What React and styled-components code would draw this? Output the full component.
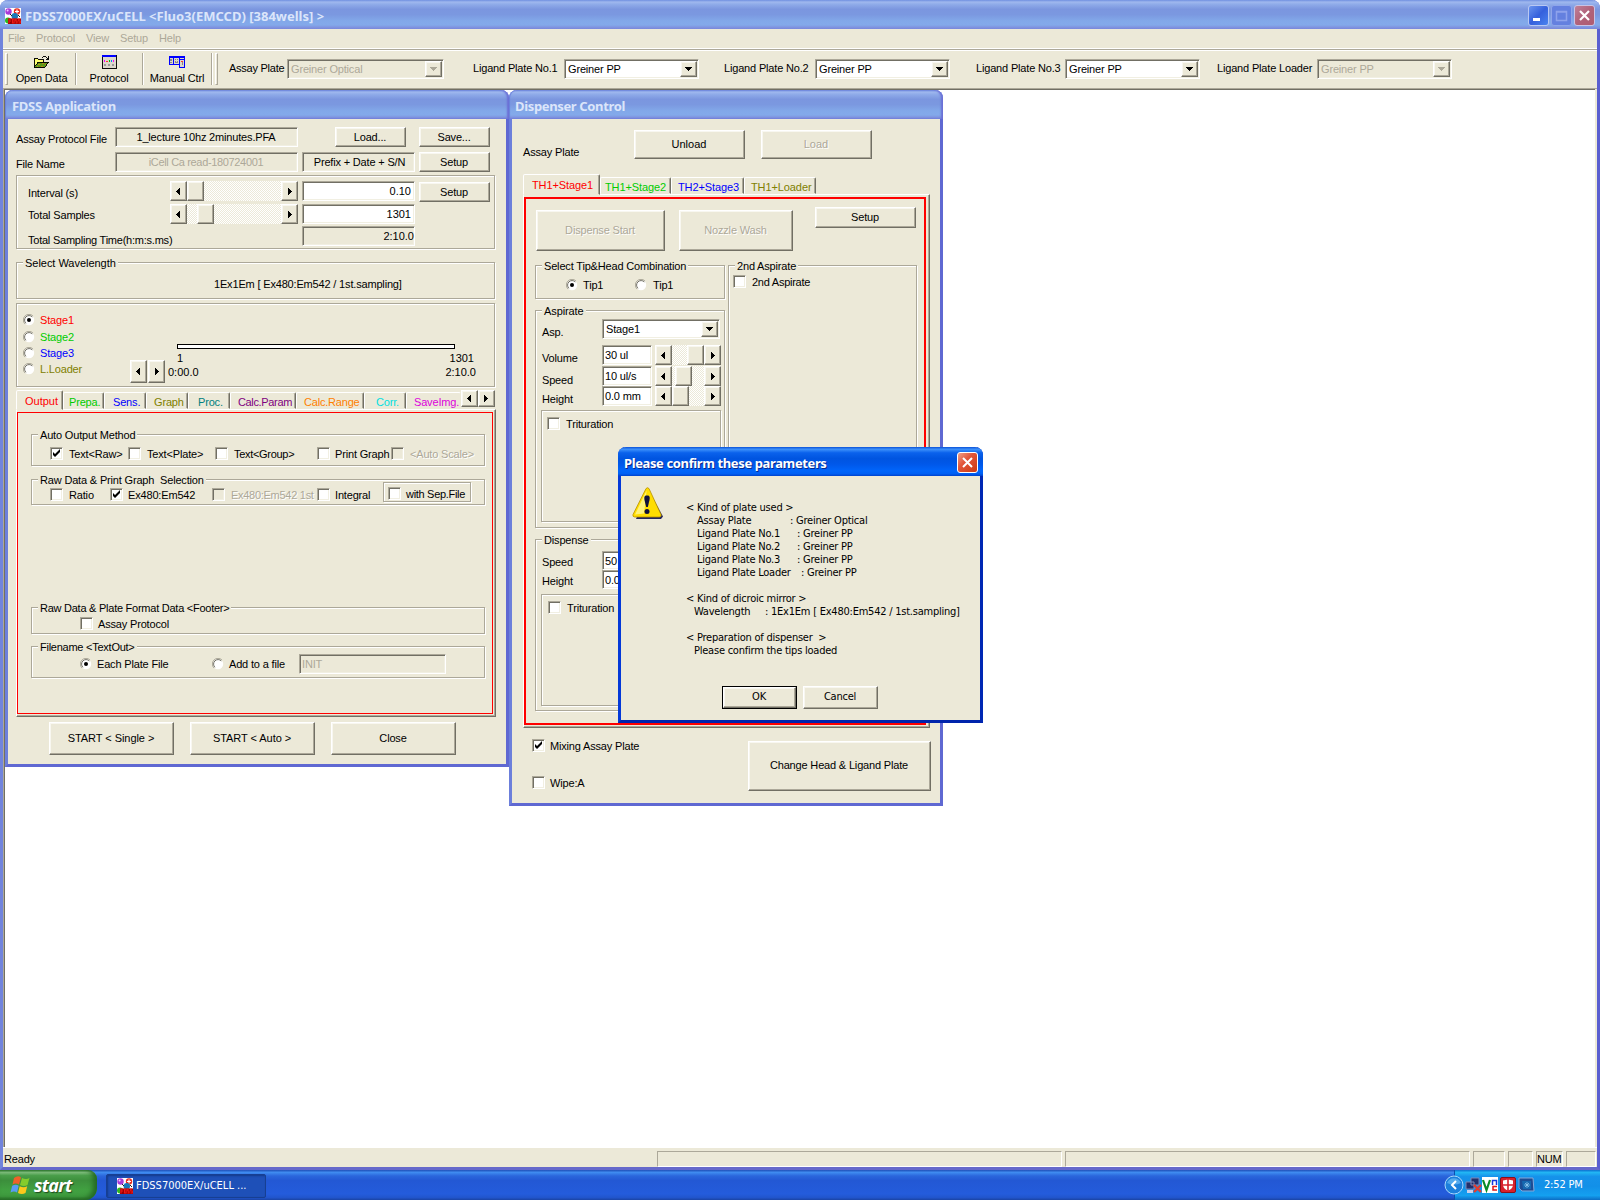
import React from "react";
import styled, { createGlobalStyle, css } from "styled-components";

const FACE = "#ece9d8";
const SHADOW = "#aca899";
const DARK = "#716f64";

const GlobalStyle = createGlobalStyle`
  * { box-sizing: border-box; }
  body {
    margin: 0;
    width: 1600px;
    height: 1200px;
    overflow: hidden;
    background: #fff;
    color: #000;
    font: 11px/14px "Liberation Sans", Arial, sans-serif;
    letter-spacing: -0.17px;
  }
  #root { height: 1200px; }
`;

const tracking = css`
  letter-spacing: ${(p) => (p.$ls === undefined ? "inherit" : p.$ls + "px")};
`;

const raised = css`
  background: ${FACE};
  border: 1px solid;
  border-color: #fff ${DARK} ${DARK} #fff;
  box-shadow: inset -1px -1px 0 ${SHADOW}, inset 1px 1px 0 #f8f7f0;
`;

const sunken = css`
  border: 1px solid;
  border-color: ${SHADOW} #fff #fff ${SHADOW};
  box-shadow: inset 1px 1px 0 ${DARK}, inset -1px -1px 0 #f1efe2;
`;

const etched = css`
  border: 1px solid ${SHADOW};
  box-shadow: 1px 1px 0 #fff, inset 1px 1px 0 #fff;
`;

const inactiveBar = css`
  background: linear-gradient(#6f8fe0 0, #a0b8ee 7%, #8fabe9 15%, #7b96df 32%, #7b98e0 50%, #82a8e9 72%, #83a9ea 86%, #7e8fdd 96%, #7687dc 100%);
  color: #dbe5fa;
`;

/* ---------- desktop ---------- */

const Screen = styled.div`
  display: flex;
  flex-direction: column;
  width: 1600px;
  height: 1200px;
`;

const MainWindow = styled.div`
  display: flex;
  flex-direction: column;
  height: 1170px;
  border: solid #7184dc;
  border-width: 0 3px 3px;
  border-right-color: #5a5fd0;
  border-bottom-color: #6669cb;
  border-radius: 8px 8px 0 0;
  background: ${FACE};
`;

const MainTitle = styled.div`
  ${inactiveBar}
  display: flex;
  align-items: center;
  height: 29px;
  margin: 0 -3px;
  padding: 2px 5px 0;
  border-radius: 8px 8px 0 0;
  gap: 4px;
`;

const TitleText = styled.span`
  font: bold 13px/18px "Noto Sans", "Open Sans", sans-serif;
  ${tracking}
  white-space: pre;
  flex: 1;
`;

const CaptionButton = styled.span`
  display: flex;
  width: 21px;
  height: 21px;
  margin-left: ${(p) => p.$ml || 0}px;
  margin-top: -1px;
  border: 1px solid ${(p) => p.$edge || "#b9c8f3"};
  border-radius: 3px;
  background: ${(p) => p.$bg};
`;

const MenuBar = styled.div`
  display: flex;
  height: 19px;
  padding: 2px 5px 0;
  gap: 11px;
  color: ${SHADOW};
  line-height: 15px;
`;

const ToolBar = styled.div`
  display: flex;
  height: 41px;
  border-top: 1px solid #fff;
  border-bottom: 1px solid ${SHADOW};
  box-shadow: inset 0 1px 0 ${SHADOW}, inset 0 2px 0 #fff;
  padding: 4px 0 3px 2px;
`;

const Grip = styled.span`
  width: 3px;
  border: 1px solid;
  border-color: #fff ${SHADOW} ${SHADOW} #fff;
  margin-left: ${(p) => p.$ml || 0}px;
  margin-right: ${(p) => p.$mr || 0}px;
`;

const ToolButton = styled.div`
  display: flex;
  flex-direction: column;
  align-items: center;
  width: ${(p) => p.$w}px;
  border-right: 1px solid ${SHADOW};
  box-shadow: 1px 0 0 #fff;
  padding-top: 2px;
  span { margin-top: 2px; }
`;

const PlateLabel = styled.span`
  flex: none;
  width: ${(p) => p.$w}px;
  margin-left: ${(p) => p.$ml}px;
  padding-top: 8px;
  white-space: nowrap;
  ${tracking}
`;

const Workspace = styled.div`
  flex: 1;
  margin-right: 2px;
  border: 1px solid ${SHADOW};
  border-width: 0 0 0 1px;
  box-shadow: inset 1px 1px 0 ${DARK};
  background: #fff;
`;

const StatusBar = styled.div`
  display: flex;
  height: 20px;
  padding-top: 3px;
  border-top: 1px solid #fff;
  gap: 3px;
`;

const StatusCell = styled.span`
  width: ${(p) => p.$w}px;
  line-height: 15px;
  border: 1px solid;
  border-color: ${SHADOW} #fff #fff ${SHADOW};
  ${(p) => p.$flat && "border-color: transparent;"}
`;

/* ---------- child windows ---------- */

const ChildWindow = styled.section`
  position: absolute;
  left: ${(p) => p.$x}px;
  top: 90px;
  width: ${(p) => p.$w}px;
  height: ${(p) => p.$h}px;
  border: solid #6c7fdb;
  border-width: 0 3px 3px;
  border-right-color: #5f68d2;
  border-bottom-color: #5f68d2;
  border-radius: 8px 8px 0 0;
  background: ${FACE};
  display: flex;
  flex-direction: column;
`;

const ChildTitle = styled.header`
  ${inactiveBar}
  height: 29px;
  flex: none;
  margin: 0 -3px;
  padding: 7px 0 0 ${(p) => p.$pl}px;
  border-radius: 8px 8px 0 0;
  box-shadow: inset -2px 0 2px #6a6fd6, inset 1px 0 1px #6a80dc;
  display: flex;
`;

const Row = styled.div`
  display: flex;
  flex: none;
  align-items: ${(p) => p.$align || "stretch"};
  height: ${(p) => p.$h}px;
  margin-top: ${(p) => p.$mt || 0}px;
  padding-left: ${(p) => p.$pl || 0}px;
`;

const Column = styled.div`
  display: flex;
  flex-direction: column;
  flex: none;
  width: ${(p) => p.$w}px;
  margin-left: ${(p) => p.$ml || 0}px;
  padding-top: ${(p) => p.$pt || 0}px;
`;

const Label = styled.span`
  flex: none;
  width: ${(p) => p.$w}px;
  padding-top: ${(p) => p.$pt || 0}px;
  margin-left: ${(p) => p.$ml || 0}px;
  line-height: 20px;
  white-space: nowrap;
  ${tracking}
`;

const Button = styled.button`
  ${raised}
  flex: none;
  display: flex;
  align-items: center;
  justify-content: center;
  width: ${(p) => p.$w}px;
  height: ${(p) => p.$h || 20}px;
  margin: ${(p) => p.$mt || 0}px 0 0 ${(p) => p.$ml || 0}px;
  padding: 0 1px ${(p) => (p.$h ? 2 : 0)}px 0;
  border-radius: 0;
  font: inherit;
  ${tracking}
  color: #000;
  &:disabled {
    color: ${SHADOW};
    text-shadow: 1px 1px 0 #fff;
  }
`;

const Field = styled.div`
  ${sunken}
  flex: none;
  width: ${(p) => p.$w}px;
  height: ${(p) => p.$h || 20}px;
  margin-left: ${(p) => p.$ml || 0}px;
  padding: 0 ${(p) => (p.$tight ? 0 : 3)}px 0 2px;
  line-height: 18px;
  ${tracking}
  text-align: ${(p) => p.$align || "left"};
  background: ${(p) => (p.$gray ? FACE : "#fff")};
  color: ${(p) => (p.$off ? SHADOW : "#000")};
  white-space: nowrap;
`;

const Group = styled.div`
  ${etched}
  flex: none;
  display: flex;
  flex-direction: ${(p) => (p.$row ? "row" : "column")};
  width: ${(p) => p.$w}px;
  height: ${(p) => p.$h}px;
  margin: ${(p) => p.$mt || 0}px 0 0 ${(p) => p.$ml || 0}px;
`;

const Legend = styled.span`
  align-self: flex-start;
  flex: none;
  height: 14px;
  margin: -7px 0 0 6px;
  padding: 0 2px;
  background: ${FACE};
  white-space: pre;
  ${tracking}
`;

const ArrowBox = styled.span`
  ${raised}
  flex: none;
  display: flex;
  align-items: center;
  justify-content: center;
  width: 17px;
  height: ${(p) => p.$h || 20}px;
  margin-left: ${(p) => p.$ml || 0}px;
  padding-right: ${(p) => p.$pr || 0}px;
`;

const Track = styled.span`
  flex: 1;
  display: flex;
  background: repeating-conic-gradient(#fff 0 25%, ${FACE} 0 50%) 0 0 / 2px 2px;
`;

const Thumb = styled.span`
  ${raised}
  width: 17px;
  margin-left: ${(p) => p.$at}px;
`;

const ScrollBox = styled.div`
  display: flex;
  flex: none;
  width: ${(p) => p.$w}px;
  height: 20px;
  margin-left: ${(p) => p.$ml || 0}px;
`;

const ComboBox = styled.div`
  ${sunken}
  flex: none;
  display: flex;
  align-items: center;
  justify-content: space-between;
  width: ${(p) => p.$w}px;
  height: 20px;
  padding: 1px 1px 1px 3px;
  background: ${(p) => (p.$off ? FACE : "#fff")};
  color: ${(p) => (p.$off ? SHADOW : "#000")};
`;

const ComboButton = styled.span`
  ${raised}
  display: flex;
  align-items: center;
  justify-content: center;
  width: 17px;
  height: 100%;
`;

const CheckItem = styled.label`
  display: flex;
  flex: none;
  align-items: center;
  gap: ${(p) => p.$gap || 6}px;
  width: ${(p) => p.$w}px;
  height: ${(p) => p.$h || 13}px;
  margin: ${(p) => p.$mt || 0}px 0 0 ${(p) => p.$ml || 0}px;
  white-space: nowrap;
  ${tracking}
  color: ${(p) => p.$color || "#000"};
  ${(p) => p.$off && `color: ${SHADOW}; text-shadow: 1px 1px 0 #fff;`}
`;

const Box = styled.span`
  ${sunken}
  flex: none;
  width: 13px;
  height: 13px;
  background: ${(p) => (p.$off ? FACE : "#fff")};
  svg { display: block; margin: 1px; }
`;

const TabStrip = styled.div`
  display: flex;
  flex: none;
  align-items: flex-end;
  height: ${(p) => p.$h}px;
  margin: ${(p) => p.$mt}px 0 0 ${(p) => p.$ml}px;
`;

const Tab = styled.span`
  flex: none;
  width: ${(p) => p.$w}px;
  height: 17px;
  padding-left: ${(p) => p.$pl || 6}px;
  overflow: hidden;
  line-height: 18px;
  ${tracking}
  color: ${(p) => p.$color};
  border: 1px solid;
  border-color: #fff ${(p) => (p.$open ? "transparent" : DARK)} transparent #fff;
  border-radius: 2px 2px 0 0;
  box-shadow: inset ${(p) => (p.$open ? 0 : -1)}px 0 0 ${SHADOW};
  ${(p) =>
    p.$active &&
    css`
      z-index: 1;
      height: ${p.$active}px;
      margin-bottom: -1px;
      line-height: 20px;
      background: ${FACE};
    `}
`;

const TabPage = styled.div`
  flex: none;
  width: ${(p) => p.$w}px;
  height: ${(p) => p.$h}px;
  margin-left: ${(p) => p.$ml}px;
  padding: 2px ${(p) => p.$pr}px 2px 0;
  border: 1px solid;
  border-color: #fff ${DARK} ${DARK} #fff;
  box-shadow: inset -1px -1px 0 ${SHADOW};
`;

const RedFrame = styled.div`
  height: 100%;
  border: ${(p) => p.$b}px solid #f00;
  display: flex;
  flex-direction: column;
`;

const Timeline = styled.div`
  width: 278px;
  height: 5px;
  margin: 40px 0 0 9px;
  border: 1px solid #000;
  background: #fff;
`;

const Ends = styled.div`
  display: flex;
  justify-content: space-between;
  height: 14px;
  padding: 0 ${(p) => p.$pr || 0}px 0 ${(p) => p.$pl || 0}px;
  margin-top: ${(p) => p.$mt || 0}px;
  letter-spacing: 0;
`;

/* ---------- message box ---------- */

const Dialog = styled.section`
  position: absolute;
  left: 618px;
  top: 447px;
  width: 365px;
  height: 276px;
  border: solid #0439d8;
  border-width: 0 3px 3px;
  border-right-color: #0028b4;
  border-bottom-color: #0024ac;
  border-radius: 8px 8px 0 0;
  background: ${FACE};
  font-family: "DejaVu Sans Condensed", "DejaVu Sans", sans-serif;
  letter-spacing: -0.23px;
`;

const DialogTitle = styled.header`
  display: flex;
  align-items: center;
  height: 29px;
  margin: 0 -3px;
  padding: 3px 5px 0 6px;
  border-radius: 8px 8px 0 0;
  background: linear-gradient(#0a52d8 0, #3d90fa 8%, #0a62ec 20%, #0054e0 40%, #0058ea 60%, #0065fb 82%, #0060f4 92%, #0042cc 100%);
  color: #fff;
  text-shadow: 1px 1px 0 #0a2a8c;
`;

const DialogBody = styled.div`
  display: flex;
  padding: 11px 0 0 11px;
`;

const Message = styled.div`
  padding: 14px 0 0 22px;
`;

const MessageLine = styled.div`
  display: flex;
  height: 13px;
  line-height: 13px;
  padding-left: ${(p) => p.$in || 0}px;
  white-space: pre;
  b { font-weight: normal; width: ${(p) => p.$w}px; }
`;

const DialogButtons = styled.div`
  display: flex;
  gap: 6px;
  padding: 29px 0 0 101px;
`;

const DefaultFrame = styled.span`
  display: flex;
  border: 1px solid #000;
`;

/* ---------- taskbar ---------- */

const TaskBar = styled.footer`
  display: flex;
  height: 30px;
  background: linear-gradient(#1f4fb8 0, #3f8cf0 8%, #2a66dc 20%, #2358d4 35%, #245cdc 80%, #2155cc 92%, #1a43a4 100%);
  color: #fff;
  font-family: "DejaVu Sans Condensed", "DejaVu Sans", sans-serif;
`;

const StartButton = styled.div`
  display: flex;
  align-items: center;
  width: 97px;
  height: 30px;
  padding-left: 10px;
  gap: 3px;
  border-radius: 0 9px 12px 0;
  background: linear-gradient(#2f7a2f 0, #82c080 8%, #4a9e4a 18%, #3c8f3c 35%, #41a041 65%, #3f9c3f 88%, #2a702a 100%);
  box-shadow: inset -4px -1px 5px #246a24;
  font: italic bold 18px/24px "Open Sans", sans-serif;
  letter-spacing: -0.8px;
  text-shadow: 1px 1px 1px #1e4a1e;
`;

const TaskButton = styled.div`
  display: flex;
  align-items: center;
  gap: 3px;
  width: 160px;
  height: 24px;
  margin: 4px 0 0 9px;
  padding-left: 10px;
  border: 1px solid #173f92;
  border-radius: 2px;
  background: #1e50b8;
  box-shadow: inset 1px 1px 2px #143a8c;
  letter-spacing: 0;
`;

const Tray = styled.div`
  display: flex;
  align-items: center;
  width: 146px;
  margin-left: auto;
  border-left: 1px solid #0c4fae;
  background: linear-gradient(#0d6fd0 0, #22b6f4 8%, #1592ea 22%, #1290e8 55%, #14a0f0 85%, #0c6cc4 100%);
  svg { flex: none; }
  svg:first-child { margin-left: -11px; }
`;

const Clock = styled.span`
  margin-left: 9px;
  white-space: nowrap;
`;

/* ---------- drawings ---------- */

const AppIcon = () => (
  <svg width="16" height="16" viewBox="0 0 16 16">
    <rect width="16" height="16" fill="#fff" />
    <circle cx="3.5" cy="3.5" r="3.2" fill="#a838d8" />
    <circle cx="2.6" cy="2.6" r="1" fill="#f0c8ff" />
    <circle cx="12" cy="3.5" r="3.2" fill="#e83020" />
    <path d="M12 1.5v4M10 3.5h4" stroke="#fff" strokeWidth="1.2" />
    <circle cx="9.8" cy="8.2" r="3.2" fill="#1878b8" />
    <circle cx="3" cy="12.5" r="3" fill="#30b820" />
    <path d="M5 6l2 2M13 7l2 2" stroke="#222" />
    <path d="M3 10.5h13V16H3z" fill="#900" />
    <path d="M4 15.5V11h2M4 13h2M7.5 11v4h1.6v-4zM12 11h-1.3v2H12v2h-1.6M15.3 11h-1.6v2h1.6v2h-1.8" fill="none" stroke="#f01818" strokeWidth="1.1" />
  </svg>
);

const OpenIcon = () => (
  <svg width="19" height="15" viewBox="0 0 19 15" shapeRendering="crispEdges">
    <path d="M1.500 13.500V4.500h1v-1h3v1h6v3" fill="#ffff70" stroke="#000" />
    <path d="M1.500 13.500L6 7.500h11.500l-5 6z" fill="#5a9a18" stroke="#000" />
    <path d="M6 10.500h2M10 9.500h2M13 10.500h1M5 12.500h1M9 12.500h2" stroke="#c08820" />
    <path d="M10 2.500h1M11 1.500h3M14 2.500h1M15 3.500h2M16.500 1v3M14 4.500h3" fill="none" stroke="#000" />
  </svg>
);

const ProtocolIcon = () => (
  <svg width="16" height="15" viewBox="0 0 16 15" shapeRendering="crispEdges">
    <rect x=".5" y=".5" width="15" height="14" fill="#dcd8cc" stroke="#000" />
    <path d="M0 1h16" stroke="#00f" strokeWidth="2" />
    <rect x="3" y="5" width="1" height="2" fill="#f0f" />
    <rect x="5" y="6" width="2" height="1" fill="#f33" />
    <rect x="8" y="5" width="1" height="2" fill="#0b0" />
    <rect x="10" y="5" width="1" height="2" fill="#08f" />
    <rect x="12" y="5" width="1" height="2" fill="#f0f" />
    <path d="M3 11h2M7 11h2M11 11h2" stroke="#999" strokeWidth="2" />
  </svg>
);

const ManualIcon = () => (
  <svg width="18" height="15" viewBox="0 0 18 15" shapeRendering="crispEdges">
    <path d="M0 1h18v13h-7v-3H0z" fill="#dcd8cc" />
    <path d="M0 1h18v2H0zM0 1h1v10H0zM5 1h1v10H5zM11 1h1v13h-1zM17 1h1v13h-1zM0 10h12v1H0zM11 13h7v1h-7zM12 4h5v1h-5z" fill="#00f" />
    <path d="M2 4h2v2H2zM2 7h2v2H2zM7 4h1v1H7zM9 4h1v1H9zM7 6h1v1H7zM9 6h1v1H9zM7 8h3v1H7zM14 8h1v3h-1z" fill="#888" />
    <path d="M13 6h2v1h-2z" fill="#f33" />
  </svg>
);

const Arrow = ({ dir, off }) => {
  const rows = {
    left: "M3 0h1v7H3zM2 1h1v5H2zM1 2h1v3H1zM0 3h1v1H0z",
    right: "M0 0h1v7H0zM1 1h1v5H1zM2 2h1v3H2zM3 3h1v1H3z",
    down: "M0 0h7v1H0zM1 1h5v1H1zM2 2h3v1H2zM3 3h1v1H3z",
  }[dir];
  return (
    <svg width={dir === "down" ? 7 : 4} height={dir === "down" ? 4 : 7} shapeRendering="crispEdges">
      <path d={rows} fill={off ? SHADOW : "#000"} />
    </svg>
  );
};

const Tick = () => (
  <svg width="9" height="9" viewBox="0 0 9 9">
    <path d="M1 3v3l2 2 5-5V0L3 5z" fill="#000" />
  </svg>
);

const Radio = ({ on }) => (
  <svg width="12" height="12" viewBox="0 0 12 12">
    <circle cx="6" cy="6" r="5.2" fill="#fff" />
    <path d="M10 2A5.5 5.5 0 0 0 2 10" fill="none" stroke={SHADOW} />
    <path d="M9.3 2.9A4.5 4.5 0 0 0 2.9 9.3" fill="none" stroke={DARK} />
    {on && <circle cx="6" cy="6" r="2" fill="#000" />}
  </svg>
);

const Warning = () => (
  <svg width="32" height="33" viewBox="0 0 32 33">
    <path d="M16.500 3L31 29.500 29 32H4z" fill="#24265c" />
    <path d="M14 1.600q1.500-1.800 3 0L29 27.500q.6 2.400-1.600 2.500H2.600Q.4 29.800 1 27.500z" fill="#fd0" stroke="#b89000" strokeWidth=".8" />
    <path d="M14.600 3.500L3 27.500l9-1z" fill="#fff27a" />
    <path d="M15 8.500c3 0 3 2 2.400 5L15.800 20h-1.600l-1.600-6.500c-.6-3-.6-5 2.400-5z" fill="#10103c" />
    <circle cx="15" cy="24.500" r="2.500" fill="#10103c" />
  </svg>
);

const WinFlag = () => (
  <svg width="21" height="20" viewBox="0 0 21 20">
    <path d="M4 3q4-3 7-.5L9 9.500Q6 7.500 2.500 9.500z" fill="#f0602a" />
    <path d="M12 3q4 2 7.500 0L17.500 10q-3.500 2-7.500 0z" fill="#84cc2c" />
    <path d="M2.200 10.800q3.500-2 6.500 0L7 17.500Q4 15.500.5 17.500z" fill="#5a9cf4" />
    <path d="M9.700 11.200q4 2 7.500 0L15.500 18q-3.500 2-7.500 0z" fill="#fcc81c" />
  </svg>
);

/* ---------- small composites ---------- */

const Scroll = ({ w, ml, at }) => (
  <ScrollBox $w={w} $ml={ml}>
    <ArrowBox $pr={2}><Arrow dir="left" /></ArrowBox>
    <Track><Thumb $at={at} /></Track>
    <ArrowBox><Arrow dir="right" /></ArrowBox>
  </ScrollBox>
);

const Combo = ({ value, w, off }) => (
  <ComboBox $w={w} $off={off}>
    {value}
    <ComboButton><Arrow dir="down" off={off} /></ComboButton>
  </ComboBox>
);

const Check = ({ on, off, w, ml, mt, ls, gap, children }) => (
  <CheckItem $w={w} $ml={ml} $mt={mt} $ls={ls} $off={off} $gap={gap}>
    <Box $off={off}>{on && <Tick />}</Box>
    {children}
  </CheckItem>
);

const RadioItem = ({ on, w, h, gap, color, children }) => (
  <CheckItem $w={w} $h={h} $gap={gap} $color={color}>
    <Radio on={on} />
    {children}
  </CheckItem>
);

/* ---------- panels ---------- */

const outputTabs = [
  ["Prepa.", 41, "#0c0", 5],
  ["Sens.", 42, "#00f", 8],
  ["Graph", 42, "#808000", 7],
  ["Proc.", 42, "#008080", 9],
  ["Calc.Param", 66, "#800080", 7, -0.35],
  ["Calc.Range", 68, "#ff8000", 7, -0.2],
  ["Corr.", 42, "#00e0e0", 11],
];

const FdssApplication = () => (
  <ChildWindow $x={5} $w={504} $h={677}>
    <ChildTitle $pl={7}><TitleText $ls={-0.27}>FDSS Application</TitleText></ChildTitle>
    <Row $mt={8} $h={20} $pl={8}>
      <Label $w={99} $pt={2}>Assay Protocol File</Label>
      <Field $w={183} $gray $align="center">1_lecture 10hz 2minutes.PFA</Field>
      <Button $w={71} $ml={37}>Load...</Button>
      <Button $w={71} $ml={13}>Save...</Button>
    </Row>
    <Row $mt={5} $h={20} $pl={8}>
      <Label $w={99} $pt={2}>File Name</Label>
      <Field $w={183} $gray $off $align="center" $ls={-0.34}>iCell Ca read-180724001</Field>
      <Field $w={113} $ml={4} $gray $align="center" $tight>Prefix + Date + S/N</Field>
      <Button $w={71} $ml={4}>Setup</Button>
    </Row>
    <Group $w={479} $h={74} $mt={3} $ml={8}>
      <Row $mt={5} $h={20} $pl={11}>
        <Label $w={142} $pt={2}>Interval (s)</Label>
        <Scroll w={128} at={0} />
        <Field $w={113} $ml={4} $align="right" $ls={0}>0.10</Field>
        <Button $w={71} $ml={4} $mt={1}>Setup</Button>
      </Row>
      <Row $mt={3} $h={20} $pl={11}>
        <Label $w={142} $pt={1}>Total Samples</Label>
        <Scroll w={128} at={10} />
        <Field $w={113} $ml={4} $align="right" $ls={0}>1301</Field>
      </Row>
      <Row $mt={2} $h={20} $pl={11}>
        <Label $w={274} $pt={4} $ls={-0.23}>Total Sampling Time(h:m:s.ms)</Label>
        <Field $w={113} $gray $align="right" $tight $ls={0}>2:10.0</Field>
      </Row>
    </Group>
    <Group $w={479} $h={37} $mt={13} $ml={8}>
      <Legend $ls={-0.03}>Select Wavelength</Legend>
      <Row $mt={7} $h={14} $pl={197}>1Ex1Em [ Ex480:Em542 / 1st.sampling]</Row>
    </Group>
    <Group $w={479} $h={84} $mt={4} $ml={8} $row>
      <Column $w={107} $ml={6} $pt={8}>
        <RadioItem on h={16.4} gap={5} color="#f00">Stage1</RadioItem>
        <RadioItem h={16.4} gap={5} color="#0c0">Stage2</RadioItem>
        <RadioItem h={16.4} gap={5} color="#00f">Stage3</RadioItem>
        <RadioItem h={16.4} gap={5} color="#808000">L.Loader</RadioItem>
      </Column>
      <Row $mt={56} $h={23}>
        <ArrowBox $h={23} $pr={1}><Arrow dir="left" /></ArrowBox>
        <ArrowBox $h={23} $ml={1}><Arrow dir="right" /></ArrowBox>
      </Row>
      <Column $w={308} $ml={3}>
        <Timeline />
        <Ends $mt={2} $pl={9} $pr={2}><span>1</span><span>1301</span></Ends>
        <Ends><span>0:00.0</span><span>2:10.0</span></Ends>
      </Column>
    </Group>
    <TabStrip $h={19} $mt={3} $ml={8}>
      <Tab $w={47} $active={20} $pl={8} $color="#f00" $ls={0}>Output</Tab>
      {outputTabs.map(([name, w, color, pl, ls]) => (
        <Tab key={name} $w={w} $color={color} $pl={pl} $ls={ls}>{name}</Tab>
      ))}
      <Tab $w={55} $color="#d0d" $pl={7} $open>SaveImg.</Tab>
      <Row $h={19}>
        <ArrowBox $h={17} $pr={2}><Arrow dir="left" /></ArrowBox>
        <ArrowBox $h={17} $pr={1}><Arrow dir="right" /></ArrowBox>
      </Row>
    </TabStrip>
    <TabPage $w={480} $h={308} $ml={8} $pr={2}>
      <RedFrame $b={1}>
        <Group $w={454} $h={32} $mt={21} $ml={13}>
          <Legend>Auto Output Method</Legend>
          <Row $mt={5} $h={13} $pl={18}>
            <Check on w={78}>Text&lt;Raw&gt;</Check>
            <Check w={87}>Text&lt;Plate&gt;</Check>
            <Check w={102} ls={-0.3}>Text&lt;Group&gt;</Check>
            <Check w={74} gap={5}>Print Graph</Check>
            <Check off w={90}>&lt;Auto Scale&gt;</Check>
          </Row>
        </Group>
        <Group $w={454} $h={26} $mt={13} $ml={13}>
          <Legend>Raw Data &amp; Print Graph  Selection</Legend>
          <Row $mt={-5} $h={20} $pl={18} $align="center">
            <Check w={60} mt={5}>Ratio</Check>
            <Check on w={102} mt={5} gap={5}>Ex480:Em542</Check>
            <Check off w={105} mt={5} ls={-0.28}>Ex480:Em542 1st</Check>
            <Check w={66} mt={5} gap={5}>Integral</Check>
            <Group $w={88} $h={20}>
              <Check w={80} ml={4} mt={4} gap={5} ls={-0.3}>with Sep.File</Check>
            </Group>
          </Row>
        </Group>
        <Group $w={454} $h={27} $mt={102} $ml={13}>
          <Legend $ls={-0.25}>Raw Data &amp; Plate Format Data &lt;Footer&gt;</Legend>
          <Row $mt={2} $h={13} $pl={48}>
            <Check gap={5}>Assay Protocol</Check>
          </Row>
        </Group>
        <Group $w={454} $h={32} $mt={12} $ml={13}>
          <Legend $ls={-0.25}>Filename &lt;TextOut&gt;</Legend>
          <Row $h={20} $pl={48} $align="center">
            <RadioItem on w={132} gap={5}>Each Plate File</RadioItem>
            <RadioItem w={87} gap={5}>Add to a file</RadioItem>
            <Field $w={147} $gray $off>INIT</Field>
          </Row>
        </Group>
      </RedFrame>
    </TabPage>
    <Row $mt={5} $h={33} $pl={41}>
      <Button $w={125} $h={33} $ls={-0.05}>START &lt; Single &gt;</Button>
      <Button $w={125} $h={33} $ml={16} $ls={-0.05}>START &lt; Auto &gt;</Button>
      <Button $w={125} $h={33} $ml={16}>Close</Button>
    </Row>
  </ChildWindow>
);

const DispenserControl = () => (
  <ChildWindow $x={509} $w={434} $h={716}>
    <ChildTitle $pl={6}><TitleText $ls={-0.35}>Dispenser Control</TitleText></ChildTitle>
    <Row $mt={11} $h={29} $pl={11}>
      <Label $w={111} $pt={12}>Assay Plate</Label>
      <Button $w={111} $h={29} $ls={0}>Unload</Button>
      <Button $w={111} $h={29} $ml={16} $ls={0} disabled>Load</Button>
    </Row>
    <TabStrip $h={20} $mt={15} $ml={11}>
      <Tab $w={77} $active={21} $pl={8} $ls={-0.1} $color="#f00">TH1+Stage1</Tab>
      <Tab $w={71} $pl={4} $ls={-0.1} $color="#0c0">TH1+Stage2</Tab>
      <Tab $w={73} $pl={6} $ls={-0.1} $color="#00f">TH2+Stage3</Tab>
      <Tab $w={72} $pl={6} $ls={-0.1} $color="#808000">TH1+Loader</Tab>
    </TabStrip>
    <TabPage $w={407} $h={534} $ml={11} $pr={3}>
      <RedFrame $b={2}>
        <Row $mt={8} $h={44} $pl={10}>
          <Button $w={129} $h={41} $mt={3} disabled>Dispense Start</Button>
          <Button $w={114} $h={41} $mt={3} $ml={14} disabled>Nozzle Wash</Button>
          <Button $w={101} $h={21} $ml={22}>Setup</Button>
        </Row>
        <Row $mt={14} $h={446} $pl={9}>
          <Column $w={190}>
            <Group $w={190} $h={34}>
              <Legend>Select Tip&amp;Head Combination</Legend>
              <Row $mt={5} $h={13} $pl={30}>
                <RadioItem on w={69} gap={5}>Tip1</RadioItem>
                <RadioItem gap={6}>Tip1</RadioItem>
              </Row>
            </Group>
            <Group $w={190} $h={218} $mt={11}>
              <Legend $ls={-0.1}>Aspirate</Legend>
              <Row $mt={1} $h={20} $pl={6}>
                <Label $w={60} $pt={3}>Asp.</Label>
                <Combo w={118} value="Stage1" />
              </Row>
              <Row $mt={6} $h={20} $pl={6}>
                <Label $w={60} $pt={3}>Volume</Label>
                <Field $w={50}>30 ul</Field>
                <Scroll w={66} ml={3} at={15} />
              </Row>
              <Row $mt={1} $h={20} $pl={6}>
                <Label $w={60} $pt={4}>Speed</Label>
                <Field $w={50}>10 ul/s</Field>
                <Scroll w={66} ml={3} at={3} />
              </Row>
              <Row $h={20} $pl={6}>
                <Label $w={60} $pt={3}>Height</Label>
                <Field $w={50}>0.0 mm</Field>
                <Scroll w={66} ml={3} at={0} />
              </Row>
              <Group $w={180} $h={112} $mt={4} $ml={5}>
                <Check ml={5} mt={6}>Trituration</Check>
              </Group>
            </Group>
            <Group $w={190} $h={172} $mt={11}>
              <Legend>Dispense</Legend>
              <Row $mt={4} $h={19} $pl={6}>
                <Label $w={60} $pt={1}>Speed</Label>
                <Field $w={50} $h={19}>50 ul/s</Field>
              </Row>
              <Row $h={19} $pl={6}>
                <Label $w={60} $pt={1}>Height</Label>
                <Field $w={50} $h={19}>0.0 mm</Field>
              </Row>
              <Group $w={180} $h={112} $mt={5} $ml={5}>
                <Check ml={6} mt={6}>Trituration</Check>
              </Group>
            </Group>
          </Column>
          <Column $w={189} $ml={3}>
            <Group $w={189} $h={446}>
              <Legend>2nd Aspirate</Legend>
              <Check ml={4} mt={2} ls={-0.25}>2nd Aspirate</Check>
            </Group>
          </Column>
        </Row>
      </RedFrame>
    </TabPage>
    <Row $mt={11} $h={52} $pl={20}>
      <Column $w={216}>
        <Check on gap={5}>Mixing Assay Plate</Check>
        <Check mt={24} gap={5}>Wipe:A</Check>
      </Column>
      <Button $w={183} $h={50} $mt={2}>Change Head &amp; Ligand Plate</Button>
    </Row>
  </ChildWindow>
);

const ConfirmDialog = () => (
  <Dialog>
    <DialogTitle>
      <TitleText $ls={-0.38}>Please confirm these parameters</TitleText>
      <CaptionButton $edge="#fff" $bg="linear-gradient(135deg, #f0a088, #e2563a 40%, #cc3a12)">
        <svg width="19" height="19"><path d="M5 5l9 9M14 5l-9 9" stroke="#fff" strokeWidth="2" /></svg>
      </CaptionButton>
    </DialogTitle>
    <DialogBody>
      <Warning />
      <Message>
        <MessageLine>&lt; Kind of plate used &gt;</MessageLine>
        <MessageLine $in={11} $w={93}><b>Assay Plate</b>: Greiner Optical</MessageLine>
        <MessageLine $in={11} $w={100}><b>Ligand Plate No.1</b>: Greiner PP</MessageLine>
        <MessageLine $in={11} $w={100}><b>Ligand Plate No.2</b>: Greiner PP</MessageLine>
        <MessageLine $in={11} $w={100}><b>Ligand Plate No.3</b>: Greiner PP</MessageLine>
        <MessageLine $in={11} $w={104}><b>Ligand Plate Loader</b>: Greiner PP</MessageLine>
        <MessageLine />
        <MessageLine>&lt; Kind of dicroic mirror &gt;</MessageLine>
        <MessageLine $in={8} $w={71}><b>Wavelength</b>: 1Ex1Em [ Ex480:Em542 / 1st.sampling]</MessageLine>
        <MessageLine />
        <MessageLine>&lt; Preparation of dispenser  &gt;</MessageLine>
        <MessageLine $in={8}>Please confirm the tips loaded</MessageLine>
      </Message>
    </DialogBody>
    <DialogButtons>
      <DefaultFrame><Button $w={73} $h={21}>OK</Button></DefaultFrame>
      <Button $w={75} $h={23}>Cancel</Button>
    </DialogButtons>
  </Dialog>
);

const TrayIcons = () => (
  <>
    <svg width="20" height="20" viewBox="0 0 20 20">
      <circle cx="10" cy="10" r="9" fill="#1c80dc" stroke="#a8d8fc" />
      <path d="M3 8a7.500 7.500 0 0 1 14 0q-7 3-14 0z" fill="#6cbcf4" opacity=".7" />
      <path d="M12 6l-4 4 4 4" fill="none" stroke="#fff" strokeWidth="2" />
    </svg>
    <svg width="18" height="17" viewBox="-1 0 18 17">
      <path d="M6 1h8v7H6zM1 5h8v7H1z" fill="#22306c" stroke="#7c88b8" />
      <path d="M2 13h6v3H2z" fill="#c8d0ec" />
      <path d="M9 8l7 7M16 8l-7 7" stroke="#e03c30" strokeWidth="2.400" />
    </svg>
    <svg width="16" height="16" viewBox="0 0 16 16">
      <rect width="16" height="16" fill="#fff" />
      <path d="M1 3l3.500 10L8 3" fill="none" stroke="#0a8c28" strokeWidth="2.200" />
      <path d="M10.500 8V3.500h4V8" fill="none" stroke="#1438e0" strokeWidth="1.500" />
      <path d="M15 9.500h-4V13h4" fill="none" stroke="#e01818" strokeWidth="1.500" />
    </svg>
    <svg width="20" height="16" viewBox="-2 0 20 16">
      <rect x=".5" y=".5" width="15" height="15" rx="1.500" fill="#d8202c" stroke="#8c1018" />
      <path d="M3 3.500l5-1 5 1v5q-1 4-5 5-4-1-5-5z" fill="#fff" />
      <path d="M8 2v12M3 8h10" stroke="#d8202c" strokeWidth="1.600" />
    </svg>
    <svg width="17" height="16" viewBox="0 0 17 16">
      <path d="M1 1h14l1 13H4L1 11z" fill="#1c4c94" stroke="#86a8d8" />
      <path d="M4 4h9v8H5z" fill="#1668b0" />
      <path d="M9 5v6M6 8h6M7 6l4 4M11 6l-4 4" stroke="#9cd0f4" strokeWidth=".7" />
    </svg>
  </>
);

export default function App() {
  return (
    <Screen>
      <GlobalStyle />
      <MainWindow>
        <MainTitle>
          <AppIcon />
          <TitleText $ls={0}>FDSS7000EX/uCELL &lt;Fluo3(EMCCD) [384wells] &gt;</TitleText>
          <CaptionButton $bg="linear-gradient(135deg, #6a94ee, #3560dc 50%, #4a84f0)">
            <svg width="19" height="19"><path d="M4 13.500h7" stroke="#fff" strokeWidth="3" /></svg>
          </CaptionButton>
          <CaptionButton $ml={-2} $edge="#8fa5ea" $bg="#6480df">
            <svg width="19" height="19"><path d="M4.500 5.500h10v9h-10zM4 6h11" fill="none" stroke="#8ea2ec" strokeWidth="1.500" /></svg>
          </CaptionButton>
          <CaptionButton $ml={-2} $edge="#c9c3e4" $bg="linear-gradient(135deg, #c08098, #b0627a 50%, #b05c70)">
            <svg width="19" height="19"><path d="M5 5l9 9M14 5l-9 9" stroke="#fff" strokeWidth="2.200" /></svg>
          </CaptionButton>
        </MainTitle>
        <MenuBar>
          <span>File</span><span>Protocol</span><span>View</span><span>Setup</span><span>Help</span>
        </MenuBar>
        <ToolBar>
          <Grip />
          <ToolButton $w={68}><OpenIcon /><span>Open Data</span></ToolButton>
          <ToolButton $w={67}><ProtocolIcon /><span>Protocol</span></ToolButton>
          <ToolButton $w={69}><ManualIcon /><span>Manual Ctrl</span></ToolButton>
          <Grip $ml={3} $mr={11} />
          <PlateLabel $ml={0} $w={58} $ls={-0.25}>Assay Plate</PlateLabel>
          <Row $h={20} $mt={6}><Combo w={157} off value="Greiner Optical" /></Row>
          <PlateLabel $ml={29} $w={91}>Ligand Plate No.1</PlateLabel>
          <Row $h={20} $mt={6}><Combo w={135} value="Greiner PP" /></Row>
          <PlateLabel $ml={25} $w={91}>Ligand Plate No.2</PlateLabel>
          <Row $h={20} $mt={6}><Combo w={135} value="Greiner PP" /></Row>
          <PlateLabel $ml={26} $w={89}>Ligand Plate No.3</PlateLabel>
          <Row $h={20} $mt={6}><Combo w={135} value="Greiner PP" /></Row>
          <PlateLabel $ml={17} $w={100}>Ligand Plate Loader</PlateLabel>
          <Row $h={20} $mt={6}><Combo w={135} off value="Greiner PP" /></Row>
        </ToolBar>
        <Workspace>
          <FdssApplication />
          <DispenserControl />
          <ConfirmDialog />
        </Workspace>
        <StatusBar>
          <StatusCell $w={651} $flat>Ready</StatusCell>
          <StatusCell $w={405} />
          <StatusCell $w={405} />
          <StatusCell $w={32} />
          <StatusCell $w={25} />
          <StatusCell $w={27}>NUM</StatusCell>
          <StatusCell $w={30} />
        </StatusBar>
      </MainWindow>
      <TaskBar>
        <StartButton><WinFlag />start</StartButton>
        <TaskButton><AppIcon />FDSS7000EX/uCELL ...</TaskButton>
        <Tray>
          <TrayIcons />
          <Clock>2:52 PM</Clock>
        </Tray>
      </TaskBar>
    </Screen>
  );
}
